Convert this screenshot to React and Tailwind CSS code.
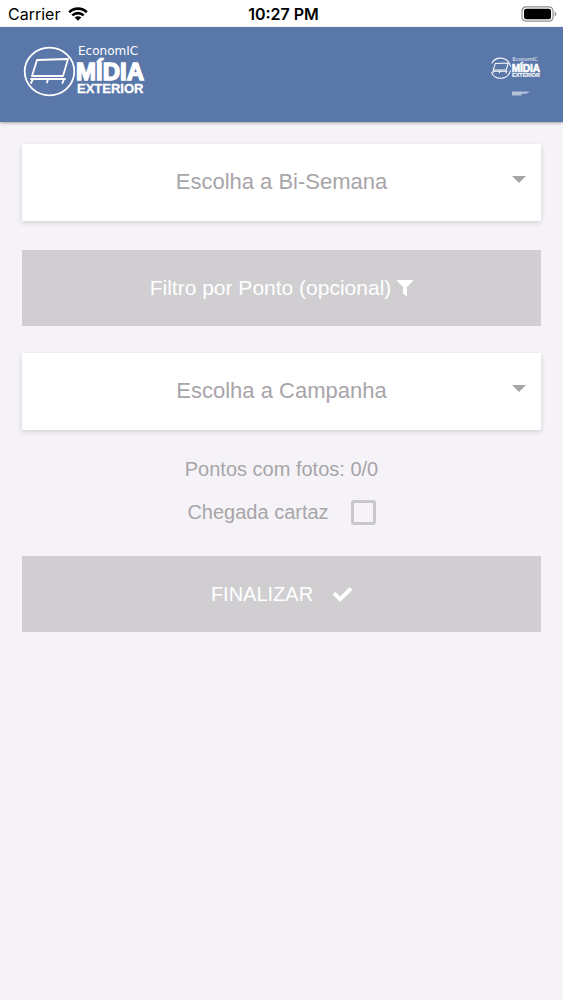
import React from 'react';
import { FaCheck, FaFilter } from 'react-icons/fa';

const selects = {
  biSemana: { id: 'bi-semana', label: 'Escolha a Bi-Semana' },
  campanha: { id: 'campanha', label: 'Escolha a Campanha' }
};

const Wifi = () => (
  <svg viewBox="0 0 20 14" className="w-5 h-3.5" aria-hidden="true">
    <g fill="none" stroke="#000" strokeWidth="2.6">
      <path d="M1.2 5.2A12.6 12.6 0 0 1 18.8 5.2" />
      <path d="M4.3 8.4A8.2 8.2 0 0 1 15.7 8.4" />
    </g>
    <path d="M10 13.8L6.7 10.5A4.7 4.7 0 0 1 13.3 10.5Z" />
  </svg>
);

const Battery = () => (
  <svg viewBox="0 0 36 16" className="w-9 h-4" aria-hidden="true">
    <rect x="1" y="0.8" width="31" height="14.4" rx="4" fill="none" stroke="#8e8e8e" strokeWidth="1.2" />
    <rect x="3" y="2.8" width="27" height="10.4" rx="2.2" />
    <path d="M33.6 5.4Q35.4 6.4 35.4 8T33.6 10.6Z" fill="#8e8e8e" />
  </svg>
);

const StatusBar = () => (
  <div className="relative h-[27px] px-2 bg-white text-black flex items-center justify-between font-[Inter,sans-serif]">
    <div className="flex items-center gap-2 text-base">
      <span>Carrier</span>
      <Wifi />
    </div>
    <span className="absolute inset-x-0 text-center pl-1 text-base font-semibold">10:27 PM</span>
    <div className="-mr-0.5">
      <Battery />
    </div>
  </div>
);

const Logo = ({ className, small }) => (
  <svg viewBox="0 0 124 52" className={className} fill="#fff" role="img" aria-label="Economic Mídia Exterior">
    <g fill="none" stroke="#fff" strokeWidth={small ? 2.4 : 1.8} strokeLinejoin="round" strokeLinecap="round">
      {small ? (
        <path d="M7 14A24 24 0 0 1 51 22M51 32A24 24 0 0 1 6 37" />
      ) : (
        <ellipse cx="27.5" cy="26.5" rx="24.8" ry="23.8" />
      )}
      <path d="M15 15L46 14L41 31H10Z" />
      <path d="M9 34H43M11 34L9 38M26 34L25 37.5M42 34L40.5 38" />
    </g>
    <text x="56" y="10" fontSize="12" fontFamily="'DejaVu Sans', sans-serif">EconomIC</text>
    <text x="54" y="35" fontSize="24" fontWeight="700" stroke="#fff" strokeWidth="1.4" fontFamily="'Liberation Sans', Arial, sans-serif">MÍDIA</text>
    <text x="55" y="48" fontSize="13" fontWeight="700" stroke="#fff" strokeWidth="0.3" fontFamily="'Liberation Sans', Arial, sans-serif">EXTERIOR</text>
  </svg>
);

const Header = () => (
  <header className="relative h-[95px] px-[22px] bg-[#5a77aa] shadow-[0_1px_3px_rgba(0,0,0,0.35)] flex items-center justify-between">
    <Logo className="w-[124px] h-[52px] mb-2" />
    <div className="flex flex-col items-center gap-3 pt-1">
      <Logo small className="w-[52px] h-[22px]" />
      <svg viewBox="0 0 18 5" className="w-[18px] h-[5px] ml-3" aria-hidden="true">
        <path d="M0 0.5H18L14 2.8H10L9 4.5H0Z" fill="#fff" opacity="0.55" />
      </svg>
    </div>
  </header>
);

const SelectCard = ({ id, label }) => (
  <div className="relative bg-white shadow-[0_2px_5px_rgba(0,0,0,0.14)]">
    <select
      id={id}
      aria-label={label}
      defaultValue=""
      className="block w-full h-[77px] px-9 pb-0.5 appearance-none bg-transparent text-center text-[22px] text-[#a7a5a8] outline-none"
    >
      <option value="">{label}</option>
    </select>
    <svg viewBox="0 0 14 7" className="absolute right-[15px] top-8 w-3.5 h-[7px] pointer-events-none" aria-hidden="true">
      <path d="M0 0H14L7 7Z" fill="#a7a5a8" />
    </svg>
  </div>
);

const App = () => {
  const [checked, setChecked] = React.useState(false);

  return (
    <div className="min-h-screen bg-[#f5f3f7] text-[#a7a5a8] font-['Liberation_Sans',Arial,sans-serif]">
      <StatusBar />
      <Header />

      <main className="px-[22px] pt-[22px]">
        <SelectCard {...selects.biSemana} />

        <button className="w-full h-[76px] mt-[29px] mb-[27px] bg-[#d0ced1] text-white text-[21px] flex items-center justify-center gap-1.5">
          Filtro por Ponto (opcional)
          <FaFilter className="w-4 h-4" />
        </button>

        <SelectCard {...selects.campanha} />

        <p className="mt-[25px] text-center text-xl leading-7">Pontos com fotos: 0/0</p>

        <div className="mt-[15px] flex items-center justify-center gap-[22px] text-xl leading-7">
          <label htmlFor="chegada">Chegada cartaz</label>
          <input
            id="chegada"
            type="checkbox"
            checked={checked}
            onChange={(e) => setChecked(e.target.checked)}
            className="w-[25px] h-[25px] appearance-none rounded-[3px] border-[3px] border-[#c9c7ca] checked:bg-[#5a77aa]"
          />
        </div>

        <button className="w-full h-[76px] mt-[30px] bg-[#d0ced1] text-white text-xl flex items-center justify-center gap-5">
          FINALIZAR
          <FaCheck className="w-[19px] h-[19px]" />
        </button>
      </main>
    </div>
  );
};

export default App;
